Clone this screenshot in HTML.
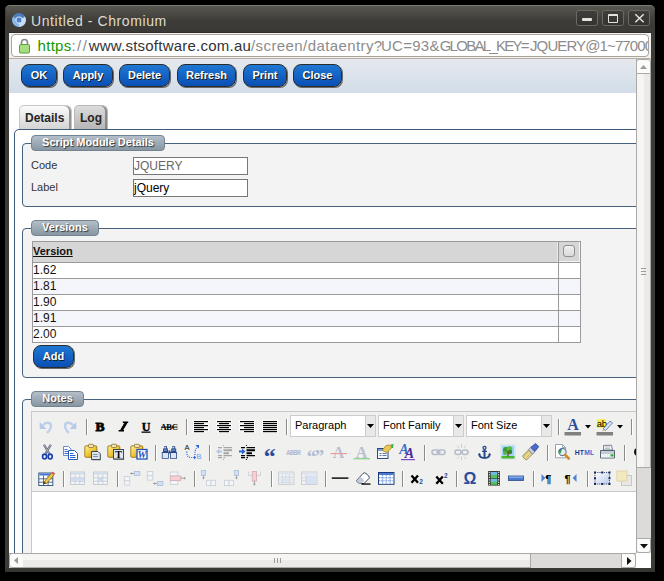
<!DOCTYPE html>
<html><head><meta charset="utf-8"><title>Untitled</title>
<style>html,body{margin:0;padding:0}body{width:664px;height:581px;background:#000;position:relative;overflow:hidden;font-family:'Liberation Sans', sans-serif}svg{display:block}</style>
</head><body>
<div style="position:absolute;left:5px;top:5px;width:650px;height:567px;background:linear-gradient(#3c3b37 560px,#34332f);border-radius:5px 5px 0 0;box-shadow:inset 0 1px 0 #7a7974"></div>
<div style="position:absolute;left:6px;top:6px;width:648px;height:27px;background:linear-gradient(#58574f,#3d3c38 55%,#3a3935);border-radius:4px 4px 0 0"></div>
<div style="position:absolute;left:9px;top:32px;width:642px;height:1px;background:#2e2d29"></div>
<svg style="position:absolute;left:12px;top:13px;" width="14" height="14" viewBox="0 0 14 14"><path d="M7 7 L0.94 3.5 A7 7 0 0 1 13.06 3.5Z" fill="#4c7cbc"/>
<path d="M7 7 L13.06 3.5 A7 7 0 0 1 7 14Z" fill="#c6dcf2"/>
<path d="M7 7 L7 14 A7 7 0 0 1 0.94 3.5Z" fill="#88b6e4"/>
<circle cx="7" cy="7" r="3.4" fill="#eaf2fa"/><rect x="4.6" y="4.6" width="4.8" height="4.8" rx="1.2" fill="#4a80cc"/></svg>
<div style="position:absolute;left:31px;top:12.5px;font:14px 'Liberation Sans', sans-serif;letter-spacing:0.6px;color:#dfdbd2;white-space:nowrap">Untitled - Chromium</div>
<div style="position:absolute;left:576px;top:10px;width:20px;height:14px;border:1px solid #6a6964;border-radius:3px;background:linear-gradient(#3e3d39,#34332f)"></div>
<div style="position:absolute;left:602px;top:10px;width:20px;height:14px;border:1px solid #6a6964;border-radius:3px;background:linear-gradient(#3e3d39,#34332f)"></div>
<div style="position:absolute;left:628px;top:10px;width:20px;height:14px;border:1px solid #6a6964;border-radius:3px;background:linear-gradient(#3e3d39,#34332f)"></div>
<div style="position:absolute;left:582px;top:18px;width:10px;height:3px;background:#e6e3dc;border-radius:1px"></div>
<div style="position:absolute;left:608px;top:14px;width:8px;height:6px;border:1.5px solid #e6e3dc;border-top-width:2.5px;border-radius:1px"></div>
<svg style="position:absolute;left:634px;top:13px;" width="11" height="10" viewBox="0 0 11 10"><path d="M1.3 1.3 L9.7 9.2 M9.7 1.3 L1.3 9.2" stroke="#e6e3dc" stroke-width="1.5"/></svg>
<div style="position:absolute;left:9px;top:33px;width:642px;height:26px;background:#f2f1ef"></div>
<div style="position:absolute;left:9px;top:58px;width:642px;height:1px;background:#b5b1a8"></div>
<div style="position:absolute;left:11px;top:34px;width:636px;height:21px;background:#fff;border:1px solid #a9a59d;border-radius:4px"></div>
<div style="position:absolute;left:0;top:0;width:664px;height:581px;clip:rect(35px,648px,56px,12px)">
<div style="position:absolute;left:37.6px;top:36.6px;font:15px 'Liberation Sans', sans-serif;letter-spacing:0.28px;color:#119a00;white-space:nowrap">https</div>
<div style="position:absolute;left:71.5px;top:36.6px;font:15px 'Liberation Sans', sans-serif;letter-spacing:1.40px;color:#8a8a8a;white-space:nowrap">://</div>
<div style="position:absolute;left:88.7px;top:36.6px;font:15px 'Liberation Sans', sans-serif;letter-spacing:0.23px;color:#333;white-space:nowrap">www.stsoftware.com.au</div>
<div style="position:absolute;left:251.0px;top:36.6px;font:15px 'Liberation Sans', sans-serif;letter-spacing:0.41px;color:#8c8c8c;white-space:nowrap">/screen/dataentry?</div>
<div style="position:absolute;left:381.0px;top:36.6px;font:15px 'Liberation Sans', sans-serif;letter-spacing:0.26px;color:#8c8c8c;white-space:nowrap">UC=93&amp;</div>
<div style="position:absolute;left:439.7px;top:36.6px;font:15px 'Liberation Sans', sans-serif;letter-spacing:-1.74px;color:#8c8c8c;white-space:nowrap">GLOBAL_KEY=</div>
<div style="position:absolute;left:530.0px;top:36.6px;font:15px 'Liberation Sans', sans-serif;letter-spacing:-0.89px;color:#8c8c8c;white-space:nowrap">JQUERY@1~7700</div>
<div style="position:absolute;left:644.7px;top:36.6px;font:15px 'Liberation Sans', sans-serif;letter-spacing:1.66px;color:#8c8c8c;white-space:nowrap">0</div>
</div>
<svg style="position:absolute;left:18px;top:38px;" width="13" height="16" viewBox="0 0 13 16"><path d="M3.5 6 V4.5 A3 3 0 0 1 9.5 4.5 V6" fill="none" stroke="#8a8a8a" stroke-width="1.6"/><rect x="1.5" y="6.5" width="10" height="8.5" rx="1" fill="#a6df7f" stroke="#5c9c3c"/></svg>
<div style="position:absolute;left:0;top:0;width:664px;height:581px;clip:rect(59px,636px,553px,9px)">
<div style="position:absolute;left:9px;top:59px;width:627px;height:494px;background:#fff"></div>
<div style="position:absolute;left:9px;top:59px;width:627px;height:34px;background:linear-gradient(#e5e9ee,#d2dde8)"></div>
<div style="position:absolute;left:21px;top:64px;width:36px;height:23px;box-sizing:border-box;border:1px solid #2b2b2b;border-radius:8px;background:linear-gradient(#1f78d3,#0a4fb4);box-shadow:1px 1px 0 #6a6a6a;color:#fff;font:bold 11px 'Liberation Sans', sans-serif;text-align:center;line-height:21px;text-shadow:1px 1px 0 #1a1a1a">OK</div>
<div style="position:absolute;left:63px;top:64px;width:50px;height:23px;box-sizing:border-box;border:1px solid #2b2b2b;border-radius:8px;background:linear-gradient(#1f78d3,#0a4fb4);box-shadow:1px 1px 0 #6a6a6a;color:#fff;font:bold 11px 'Liberation Sans', sans-serif;text-align:center;line-height:21px;text-shadow:1px 1px 0 #1a1a1a">Apply</div>
<div style="position:absolute;left:119px;top:64px;width:51px;height:23px;box-sizing:border-box;border:1px solid #2b2b2b;border-radius:8px;background:linear-gradient(#1f78d3,#0a4fb4);box-shadow:1px 1px 0 #6a6a6a;color:#fff;font:bold 11px 'Liberation Sans', sans-serif;text-align:center;line-height:21px;text-shadow:1px 1px 0 #1a1a1a">Delete</div>
<div style="position:absolute;left:177px;top:64px;width:59px;height:23px;box-sizing:border-box;border:1px solid #2b2b2b;border-radius:8px;background:linear-gradient(#1f78d3,#0a4fb4);box-shadow:1px 1px 0 #6a6a6a;color:#fff;font:bold 11px 'Liberation Sans', sans-serif;text-align:center;line-height:21px;text-shadow:1px 1px 0 #1a1a1a">Refresh</div>
<div style="position:absolute;left:243px;top:64px;width:44px;height:23px;box-sizing:border-box;border:1px solid #2b2b2b;border-radius:8px;background:linear-gradient(#1f78d3,#0a4fb4);box-shadow:1px 1px 0 #6a6a6a;color:#fff;font:bold 11px 'Liberation Sans', sans-serif;text-align:center;line-height:21px;text-shadow:1px 1px 0 #1a1a1a">Print</div>
<div style="position:absolute;left:293px;top:64px;width:49px;height:23px;box-sizing:border-box;border:1px solid #2b2b2b;border-radius:8px;background:linear-gradient(#1f78d3,#0a4fb4);box-shadow:1px 1px 0 #6a6a6a;color:#fff;font:bold 11px 'Liberation Sans', sans-serif;text-align:center;line-height:21px;text-shadow:1px 1px 0 #1a1a1a">Close</div>
<div style="position:absolute;left:19px;top:105px;width:53px;height:24px;box-sizing:border-box;border:1px solid #c6c6c6;border-bottom:none;border-radius:5px 6px 0 0;background:linear-gradient(#fbfbfb,#d4d4d4);box-shadow:inset -2px 0 0 #939393;font:bold 12px 'Liberation Sans', sans-serif;color:#262626;padding:7px 0 0 6px"></div>
<div style="position:absolute;left:25px;top:111px;font:bold 12px 'Liberation Sans', sans-serif;color:#262626">Details</div>
<div style="position:absolute;left:74px;top:105px;width:34px;height:24px;box-sizing:border-box;border:1px solid #b8b8b8;border-bottom:none;border-radius:5px 6px 0 0;background:linear-gradient(#dcdcdc,#b6b6b6);box-shadow:inset -2px 0 0 #8a8a8a"></div>
<div style="position:absolute;left:80px;top:111px;font:bold 12px 'Liberation Sans', sans-serif;color:#262626">Log</div>
<div style="position:absolute;left:14px;top:129px;width:700px;height:600px;box-sizing:border-box;border:1px solid #3d5b7c;border-radius:5px;background:#fff"></div>
<div style="position:absolute;left:22px;top:143px;width:700px;height:64px;box-sizing:border-box;border:1px solid #46627f;border-radius:4px;background:#f3f3f3"></div><div style="position:absolute;left:31px;top:135px;width:134px;height:16px;box-sizing:border-box;border:1px solid #74838f;border-radius:4px;background:linear-gradient(#b3bec8,#8797a3);color:#fff;font:bold 11px 'Liberation Sans', sans-serif;text-align:center;line-height:13px;text-shadow:1px 1px 1px #333">Script Module Details</div>
<div style="position:absolute;left:31px;top:158.5px;font:11px 'Liberation Sans', sans-serif;color:#333">Code</div>
<div style="position:absolute;left:31px;top:180.5px;font:11px 'Liberation Sans', sans-serif;color:#333">Label</div>
<div style="position:absolute;left:133px;top:157px;width:115px;height:18px;box-sizing:border-box;border:1px solid #777;background:#fff;font:12px 'Liberation Sans', sans-serif;color:#666;padding:1px 0 0 0;line-height:15px">JQUERY</div>
<div style="position:absolute;left:133px;top:179px;width:115px;height:18px;box-sizing:border-box;border:1px solid #777;background:#fff;font:12px 'Liberation Sans', sans-serif;color:#000;padding:1px 0 0 0;line-height:15px">jQuery</div>
<div style="position:absolute;left:22px;top:228px;width:700px;height:150px;box-sizing:border-box;border:1px solid #46627f;border-radius:4px;background:#f3f3f3"></div><div style="position:absolute;left:31px;top:220px;width:68px;height:16px;box-sizing:border-box;border:1px solid #74838f;border-radius:4px;background:linear-gradient(#b3bec8,#8797a3);color:#fff;font:bold 11px 'Liberation Sans', sans-serif;text-align:center;line-height:13px;text-shadow:1px 1px 1px #333">Versions</div>
<div style="position:absolute;left:32px;top:241px;width:549px;height:102px;box-sizing:border-box;border:1px solid #9a9a9a;background:#fff"></div>
<div style="position:absolute;left:33px;top:242px;width:525px;height:20px;background:#d6d6d6"></div>
<div style="position:absolute;left:559px;top:242px;width:21px;height:20px;background:#d6d6d6"></div>
<div style="position:absolute;left:558px;top:242px;width:1px;height:100px;background:#9a9a9a"></div>
<div style="position:absolute;left:557px;top:242px;width:1px;height:20px;background:#ececec"></div>
<div style="position:absolute;left:33px;top:245px;font:bold 11px 'Liberation Sans', sans-serif;color:#111;text-decoration:underline">Version</div>
<div style="position:absolute;left:563px;top:245px;width:12px;height:12px;box-sizing:border-box;border:1px solid #8f8f8f;border-radius:3px;background:linear-gradient(#f0f0f0,#dadada)"></div>
<div style="position:absolute;left:579px;top:242px;width:1px;height:20px;background:#f4f4f4"></div>
<div style="position:absolute;left:559px;top:261px;width:21px;height:1px;background:#f4f4f4"></div>
<div style="position:absolute;left:33px;top:262px;width:547px;height:1px;background:#9a9a9a"></div>
<div style="position:absolute;left:33px;top:263px;font:12px 'Liberation Sans', sans-serif;color:#111;line-height:15px">1.62</div>
<div style="position:absolute;left:33px;top:278px;width:547px;height:1px;background:#9a9a9a"></div>
<div style="position:absolute;left:33px;top:279px;width:525px;height:15px;background:#f4f6fb"></div>
<div style="position:absolute;left:559px;top:279px;width:21px;height:15px;background:#f4f6fb"></div>
<div style="position:absolute;left:33px;top:279px;font:12px 'Liberation Sans', sans-serif;color:#111;line-height:15px">1.81</div>
<div style="position:absolute;left:33px;top:294px;width:547px;height:1px;background:#9a9a9a"></div>
<div style="position:absolute;left:33px;top:295px;font:12px 'Liberation Sans', sans-serif;color:#111;line-height:15px">1.90</div>
<div style="position:absolute;left:33px;top:310px;width:547px;height:1px;background:#9a9a9a"></div>
<div style="position:absolute;left:33px;top:311px;width:525px;height:15px;background:#f4f6fb"></div>
<div style="position:absolute;left:559px;top:311px;width:21px;height:15px;background:#f4f6fb"></div>
<div style="position:absolute;left:33px;top:311px;font:12px 'Liberation Sans', sans-serif;color:#111;line-height:15px">1.91</div>
<div style="position:absolute;left:33px;top:326px;width:547px;height:1px;background:#9a9a9a"></div>
<div style="position:absolute;left:33px;top:327px;font:12px 'Liberation Sans', sans-serif;color:#111;line-height:15px">2.00</div>
<div style="position:absolute;left:33px;top:345px;width:41px;height:23px;box-sizing:border-box;border:1px solid #2b2b2b;border-radius:8px;background:linear-gradient(#1f78d3,#0a4fb4);box-shadow:1px 1px 0 #6a6a6a;color:#fff;font:bold 11px 'Liberation Sans', sans-serif;text-align:center;line-height:21px;text-shadow:1px 1px 0 #1a1a1a">Add</div>
<div style="position:absolute;left:22px;top:399px;width:700px;height:302px;box-sizing:border-box;border:1px solid #46627f;border-radius:4px;background:#f3f3f3"></div><div style="position:absolute;left:31px;top:391px;width:53px;height:16px;box-sizing:border-box;border:1px solid #74838f;border-radius:4px;background:linear-gradient(#b3bec8,#8797a3);color:#fff;font:bold 11px 'Liberation Sans', sans-serif;text-align:center;line-height:13px;text-shadow:1px 1px 1px #333">Notes</div>
<div style="position:absolute;left:31px;top:411px;width:700px;height:200px;box-sizing:border-box;border:1px solid #c8c8c8;background:#fff"></div>
<div style="position:absolute;left:32px;top:412px;width:700px;height:79px;background:#f0f0ee"></div>
<div style="position:absolute;left:32px;top:491px;width:700px;height:1px;background:#c8c8c8"></div>
<svg style="position:absolute;left:36px;top:416px;" width="20" height="20" viewBox="0 0 20 20"><path d="M7 9.5 C9 6 15 5.5 15 10 C15 13 13 15 11 17" fill="none" stroke="#c0cfec" stroke-width="2.4"/><path d="M3.7 6 V13 H10.5Z" fill="#b8c8ea"/></svg>
<svg style="position:absolute;left:59px;top:416px;" width="20" height="20" viewBox="0 0 20 20"><g transform="translate(21,0) scale(-1,1)"><path d="M7 9.5 C9 6 15 5.5 15 10 C15 13 13 15 11 17" fill="none" stroke="#c0cfec" stroke-width="2.4"/><path d="M3.7 6 V13 H10.5Z" fill="#b8c8ea"/></g></svg>
<div style="position:absolute;left:86px;top:419px;width:1px;height:16px;background:#8f8a8a"></div><div style="position:absolute;left:87px;top:419px;width:1px;height:16px;background:#fff"></div>
<svg style="position:absolute;left:90px;top:416px;" width="20" height="20" viewBox="0 0 20 20"><text x="10" y="15" text-anchor="middle" font-family="Liberation Serif" font-weight="bold" font-size="13.5" fill="#000" stroke="#000" stroke-width="0.9">B</text></svg>
<svg style="position:absolute;left:113px;top:416px;" width="20" height="20" viewBox="0 0 20 20"><path d="M9.8 6.2 H15.2 M5.6 14.8 H11 M13 6.2 L8.2 14.8" stroke="#000" stroke-width="1.5" fill="none"/><path d="M13.2 6.5 L8.4 14.5" stroke="#000" stroke-width="2.6"/></svg>
<svg style="position:absolute;left:136px;top:416px;" width="20" height="20" viewBox="0 0 20 20"><text x="10" y="14.5" text-anchor="middle" font-family="Liberation Serif" font-weight="bold" font-size="12" fill="#000" stroke="#000" stroke-width="0.4">U</text><rect x="5.5" y="15.5" width="9" height="1.3" fill="#000"/></svg>
<svg style="position:absolute;left:159px;top:416px;" width="20" height="20" viewBox="0 0 20 20"><text x="10" y="14" text-anchor="middle" font-family="Liberation Serif" font-weight="bold" font-size="8.5" fill="#000" letter-spacing="-0.3">ABC</text><rect x="2" y="10.6" width="16.5" height="1" fill="#000"/></svg>
<div style="position:absolute;left:186px;top:419px;width:1px;height:16px;background:#8f8a8a"></div><div style="position:absolute;left:187px;top:419px;width:1px;height:16px;background:#fff"></div>
<svg style="position:absolute;left:190px;top:416px;" width="20" height="20" viewBox="0 0 20 20"><rect x="3" y="4" width="16" height="3" fill="#fff" opacity="0.9"/><rect x="3" y="6" width="12" height="3" fill="#fff" opacity="0.9"/><rect x="3" y="8" width="16" height="3" fill="#fff" opacity="0.9"/><rect x="3" y="10" width="12" height="3" fill="#fff" opacity="0.9"/><rect x="3" y="12" width="16" height="3" fill="#fff" opacity="0.9"/><rect x="3" y="14" width="12" height="3" fill="#fff" opacity="0.9"/><rect x="4" y="5" width="14" height="1.2" fill="#000"/><rect x="4" y="7" width="10" height="1.2" fill="#000"/><rect x="4" y="9" width="14" height="1.2" fill="#000"/><rect x="4" y="11" width="10" height="1.2" fill="#000"/><rect x="4" y="13" width="14" height="1.2" fill="#000"/><rect x="4" y="15" width="10" height="1.2" fill="#000"/></svg>
<svg style="position:absolute;left:213px;top:416px;" width="20" height="20" viewBox="0 0 20 20"><rect x="3" y="4" width="16" height="3" fill="#fff" opacity="0.9"/><rect x="5" y="6" width="12" height="3" fill="#fff" opacity="0.9"/><rect x="3" y="8" width="16" height="3" fill="#fff" opacity="0.9"/><rect x="5" y="10" width="12" height="3" fill="#fff" opacity="0.9"/><rect x="3" y="12" width="16" height="3" fill="#fff" opacity="0.9"/><rect x="5" y="14" width="12" height="3" fill="#fff" opacity="0.9"/><rect x="4" y="5" width="14" height="1.2" fill="#000"/><rect x="6" y="7" width="10" height="1.2" fill="#000"/><rect x="4" y="9" width="14" height="1.2" fill="#000"/><rect x="6" y="11" width="10" height="1.2" fill="#000"/><rect x="4" y="13" width="14" height="1.2" fill="#000"/><rect x="6" y="15" width="10" height="1.2" fill="#000"/></svg>
<svg style="position:absolute;left:236px;top:416px;" width="20" height="20" viewBox="0 0 20 20"><rect x="3" y="4" width="16" height="3" fill="#fff" opacity="0.9"/><rect x="7" y="6" width="12" height="3" fill="#fff" opacity="0.9"/><rect x="3" y="8" width="16" height="3" fill="#fff" opacity="0.9"/><rect x="7" y="10" width="12" height="3" fill="#fff" opacity="0.9"/><rect x="3" y="12" width="16" height="3" fill="#fff" opacity="0.9"/><rect x="7" y="14" width="12" height="3" fill="#fff" opacity="0.9"/><rect x="4" y="5" width="14" height="1.2" fill="#000"/><rect x="8" y="7" width="10" height="1.2" fill="#000"/><rect x="4" y="9" width="14" height="1.2" fill="#000"/><rect x="8" y="11" width="10" height="1.2" fill="#000"/><rect x="4" y="13" width="14" height="1.2" fill="#000"/><rect x="8" y="15" width="10" height="1.2" fill="#000"/></svg>
<svg style="position:absolute;left:259px;top:416px;" width="20" height="20" viewBox="0 0 20 20"><rect x="3" y="4" width="16" height="3" fill="#fff" opacity="0.9"/><rect x="3" y="6" width="16" height="3" fill="#fff" opacity="0.9"/><rect x="3" y="8" width="16" height="3" fill="#fff" opacity="0.9"/><rect x="3" y="10" width="16" height="3" fill="#fff" opacity="0.9"/><rect x="3" y="12" width="16" height="3" fill="#fff" opacity="0.9"/><rect x="3" y="14" width="16" height="3" fill="#fff" opacity="0.9"/><rect x="4" y="5" width="14" height="1.2" fill="#000"/><rect x="4" y="7" width="14" height="1.2" fill="#000"/><rect x="4" y="9" width="14" height="1.2" fill="#000"/><rect x="4" y="11" width="14" height="1.2" fill="#000"/><rect x="4" y="13" width="14" height="1.2" fill="#000"/><rect x="4" y="15" width="14" height="1.2" fill="#000"/></svg>
<div style="position:absolute;left:286px;top:419px;width:1px;height:16px;background:#8f8a8a"></div><div style="position:absolute;left:287px;top:419px;width:1px;height:16px;background:#fff"></div>
<div style="position:absolute;left:558px;top:419px;width:1px;height:16px;background:#8f8a8a"></div><div style="position:absolute;left:559px;top:419px;width:1px;height:16px;background:#fff"></div>
<div style="position:absolute;left:631px;top:419px;width:1px;height:16px;background:#8f8a8a"></div><div style="position:absolute;left:632px;top:419px;width:1px;height:16px;background:#fff"></div>
<svg style="position:absolute;left:36px;top:442px;" width="20" height="20" viewBox="0 0 20 20"><path d="M8 2.8 L13.2 11.5 M14.8 2.8 L9.6 11.5" stroke="#5a6470" stroke-width="2.2"/><path d="M8 2.8 L13.2 11.5 M14.8 2.8 L9.6 11.5" stroke="#b0b8c4" stroke-width="0.9"/><ellipse cx="8.6" cy="14.6" rx="2" ry="2.4" fill="none" stroke="#1a40b0" stroke-width="1.7"/><ellipse cx="14.2" cy="14.6" rx="2" ry="2.4" fill="none" stroke="#1a40b0" stroke-width="1.7"/></svg>
<svg style="position:absolute;left:59px;top:442px;" width="20" height="20" viewBox="0 0 20 20"><path d="M4.5 4.5 H9.5 L12 7 V13.5 H4.5Z" fill="#fff" stroke="#6a8ccc"/><path d="M5.5 7.5h3M5.5 9.5h4M5.5 11.5h4" stroke="#3a6ad0" stroke-width="1"/><path d="M9.5 8.5 H15.5 L18.5 11.5 V17.5 H9.5Z" fill="#fff" stroke="#2a5ab8"/><path d="M11 11.5h3.5M11 13.5h5.5M11 15.5h5.5" stroke="#2a62d0" stroke-width="1"/></svg>
<svg style="position:absolute;left:82px;top:442px;" width="20" height="20" viewBox="0 0 20 20"><defs><linearGradient id="g1" x1="0" y1="0" x2="1" y2="1"><stop offset="0" stop-color="#fff0a0"/><stop offset="0.5" stop-color="#f0c838"/><stop offset="1" stop-color="#c08a10"/></linearGradient></defs><rect x="2.8" y="3.8" width="12" height="11.5" rx="1.2" fill="url(#g1)" stroke="#9a7418" stroke-width="0.9"/><rect x="6.5" y="2.3" width="5" height="3.2" rx="0.8" fill="#f0e4b0" stroke="#8a7030" stroke-width="0.8"/><path d="M9.5 9.5 H16 L18.3 11.8 V17.5 H9.5Z" fill="#dde5f0" stroke="#3a4658"/><path d="M11 12.5h4.5M11 14.5h5" stroke="#8090a8"/><rect x="10" y="17.5" width="9" height="1" fill="#555" opacity="0.5"/></svg>
<svg style="position:absolute;left:105px;top:442px;" width="20" height="20" viewBox="0 0 20 20"><defs><linearGradient id="g2" x1="0" y1="0" x2="1" y2="1"><stop offset="0" stop-color="#fff0a0"/><stop offset="0.5" stop-color="#f0c838"/><stop offset="1" stop-color="#c08a10"/></linearGradient></defs><rect x="2.8" y="3.8" width="12" height="11.5" rx="1.2" fill="url(#g2)" stroke="#9a7418" stroke-width="0.9"/><rect x="6.5" y="2.3" width="5" height="3.2" rx="0.8" fill="#f0e4b0" stroke="#8a7030" stroke-width="0.8"/><rect x="8.5" y="7.5" width="10" height="9.5" fill="#dfe6ef" stroke="#404654"/><rect x="9.2" y="17" width="10" height="1" fill="#444" opacity="0.6"/><text x="13.5" y="15.5" text-anchor="middle" font-family="Liberation Serif" font-weight="bold" font-size="10" fill="#000">T</text></svg>
<svg style="position:absolute;left:128px;top:442px;" width="20" height="20" viewBox="0 0 20 20"><defs><linearGradient id="g3" x1="0" y1="0" x2="1" y2="1"><stop offset="0" stop-color="#fff0a0"/><stop offset="0.5" stop-color="#f0c838"/><stop offset="1" stop-color="#c08a10"/></linearGradient></defs><rect x="2.8" y="3.8" width="12" height="11.5" rx="1.2" fill="url(#g3)" stroke="#9a7418" stroke-width="0.9"/><rect x="6.5" y="2.3" width="5" height="3.2" rx="0.8" fill="#f0e4b0" stroke="#8a7030" stroke-width="0.8"/><rect x="9" y="7.5" width="10" height="9.5" fill="#fff" stroke="#2050c0" stroke-width="1.3"/><text x="14" y="15.8" text-anchor="middle" font-family="Liberation Serif" font-weight="bold" font-style="italic" font-size="10" fill="#2050c0">W</text></svg>
<div style="position:absolute;left:155px;top:445px;width:1px;height:16px;background:#8f8a8a"></div><div style="position:absolute;left:156px;top:445px;width:1px;height:16px;background:#fff"></div>
<svg style="position:absolute;left:159px;top:442px;" width="20" height="20" viewBox="0 0 20 20"><path d="M5 4.2 H8 V6.5 H9 V10 H9.8 V16.7 H2.8 V10 H4 V6.5 H5Z" fill="#2a4888"/><rect x="3.6" y="11" width="5.4" height="5" fill="#dbe5f4"/><rect x="5.3" y="5" width="1.8" height="1.4" fill="#c8d4ec"/><rect x="4.8" y="7.3" width="3.4" height="1.6" fill="#6a88c0"/><path d="M13.2 4.2 H16.2 V6.5 H17.2 V10 H18.0 V16.7 H11.0 V10 H12.2 V6.5 H13.2Z" fill="#2a4888"/><rect x="11.799999999999999" y="11" width="5.4" height="5" fill="#dbe5f4"/><rect x="13.5" y="5" width="1.8" height="1.4" fill="#c8d4ec"/><rect x="13.0" y="7.3" width="3.4" height="1.6" fill="#6a88c0"/><rect x="9.5" y="8.5" width="2" height="3" fill="#2a4888"/></svg>
<svg style="position:absolute;left:182px;top:442px;" width="20" height="20" viewBox="0 0 20 20"><text x="2.5" y="8.3" font-family="Liberation Sans" font-size="7.5" fill="#111">A</text><path d="M4.8 9.5 Q4.5 15.5 9 15.5 H12" fill="none" stroke="#2a62e0" stroke-width="1.2" stroke-dasharray="1 1.1"/><path d="M12 13.5 L14.2 15.5 L12 17.5Z" fill="#2a62e0"/><path d="M13 13 Q12.5 8 15.5 4.5" fill="none" stroke="#2a62e0" stroke-width="1.2" stroke-dasharray="1 1.1"/><path d="M13.5 3 H17 V6.5Z" fill="#2a62e0"/><text x="14.5" y="17.4" font-family="Liberation Sans" font-size="7.5" fill="#6a9af0">B</text></svg>
<div style="position:absolute;left:209px;top:445px;width:1px;height:16px;background:#8f8a8a"></div><div style="position:absolute;left:210px;top:445px;width:1px;height:16px;background:#fff"></div>
<svg style="position:absolute;left:213px;top:442px;" width="20" height="20" viewBox="0 0 20 20"><g stroke="#a6a6a6"><path d="M5 5.6h4M5 13.6h4M5 15.6h4M10.5 5.6h8.5M10.5 13.6h8.5M10.5 15.6h1.5" stroke-width="1.1"/><path d="M10.5 8.3h8.5M10.5 11.2h5.5" stroke-width="2"/><path d="M10.4 3v1M10.4 17v1" stroke-width="1"/></g><path d="M3 9.4 L6.5 6.4 V8.4 H9 V10.4 H6.5 V12.4Z" fill="#b4c8ec"/></svg>
<svg style="position:absolute;left:236px;top:442px;" width="20" height="20" viewBox="0 0 20 20"><g stroke="#000"><path d="M5 5.6h4M5 13.6h4M5 15.6h4M10.5 5.6h8.5M10.5 13.6h8.5M10.5 15.6h1.5" stroke-width="1.1"/><path d="M10.5 8.3h8.5M10.5 11.2h5.5" stroke-width="2"/><path d="M10.4 3v1M10.4 17v1" stroke-width="1"/></g><path d="M9.5 9.4 L6 6.4 V8.4 H3 V10.4 H6 V12.4Z" fill="#2a62d0"/></svg>
<svg style="position:absolute;left:259px;top:442px;" width="20" height="20" viewBox="0 0 20 20"><text x="10.8" y="21.5" text-anchor="middle" font-family="Liberation Serif" font-weight="bold" font-size="24" fill="#2a4a9c">&#8220;</text></svg>
<svg style="position:absolute;left:282px;top:442px;" width="20" height="20" viewBox="0 0 20 20"><text x="11.3" y="12.8" text-anchor="middle" font-family="Liberation Mono" font-weight="bold" font-size="6.8" fill="#b0bcd4" letter-spacing="-0.6">ABBR</text></svg>
<svg style="position:absolute;left:305px;top:442px;" width="20" height="20" viewBox="0 0 20 20"><text x="6.6" y="20.5" text-anchor="middle" font-family="Liberation Serif" font-weight="bold" font-size="19" fill="#b0bcd4">&#8220;</text><text x="14.4" y="20.5" text-anchor="middle" font-family="Liberation Serif" font-weight="bold" font-size="19" fill="#b0bcd4">&#8221;</text></svg>
<svg style="position:absolute;left:328px;top:442px;" width="20" height="20" viewBox="0 0 20 20"><text x="10.5" y="16" text-anchor="middle" font-family="Liberation Serif" font-weight="bold" font-size="16" fill="#b8c0d0">A</text><rect x="2.5" y="11" width="16.5" height="1.1" fill="#ec9a9a"/></svg>
<svg style="position:absolute;left:351px;top:442px;" width="20" height="20" viewBox="0 0 20 20"><text x="10.5" y="15.5" text-anchor="middle" font-family="Liberation Serif" font-weight="bold" font-size="16" fill="#b8c0d0">A</text><rect x="2.5" y="16.2" width="16.5" height="1.1" fill="#7ccf7c"/></svg>
<svg style="position:absolute;left:374px;top:442px;" width="20" height="20" viewBox="0 0 20 20"><rect x="3.5" y="6.5" width="10.5" height="10" fill="#f4f6fa" stroke="#2a4a80"/><rect x="4" y="7" width="9.5" height="2" fill="#7aa0d8"/><path d="M5.5 11.5h2M8.5 11.5h4M5.5 13.5h2M8.5 13.5h4" stroke="#5a78a8" stroke-width="1"/><path d="M8 8.5 L12 3.5 L16.5 3 L17.5 6 L13 10.5Z" fill="#ecc850" stroke="#9a7a20" stroke-width="0.7"/><path d="M17 2.5 L19.5 2 L19 6 L17.5 6Z" fill="#30b040"/></svg>
<svg style="position:absolute;left:397px;top:442px;" width="20" height="20" viewBox="0 0 20 20"><text x="7" y="12" text-anchor="middle" font-family="Liberation Serif" font-weight="bold" font-style="italic" font-size="14" fill="#3a6ed0">A</text><text x="12.5" y="16" text-anchor="middle" font-family="Liberation Serif" font-weight="bold" font-style="italic" font-size="14" fill="#5028a0">A</text><rect x="4" y="17" width="14" height="1.2" fill="#7a48c8"/></svg>
<div style="position:absolute;left:424px;top:445px;width:1px;height:16px;background:#8f8a8a"></div><div style="position:absolute;left:425px;top:445px;width:1px;height:16px;background:#fff"></div>
<svg style="position:absolute;left:428px;top:442px;" width="20" height="20" viewBox="0 0 20 20"><rect x="4" y="8" width="7" height="4.5" rx="2.2" fill="none" stroke="#b4bcc8" stroke-width="1.6"/><rect x="10" y="8" width="7" height="4.5" rx="2.2" fill="none" stroke="#b4bcc8" stroke-width="1.6"/><path d="M8 10.2h5" stroke="#b4bcc8" stroke-width="1.2"/></svg>
<svg style="position:absolute;left:451px;top:442px;" width="20" height="20" viewBox="0 0 20 20"><rect x="4" y="8" width="6" height="4.5" rx="2.2" fill="none" stroke="#b4bcc8" stroke-width="1.6"/><rect x="11" y="8" width="6" height="4.5" rx="2.2" fill="none" stroke="#b4bcc8" stroke-width="1.6"/><path d="M10.5 2v4M10.5 14.5v4M6 3.5l2 2.5M15 3.5l-2 2.5M6 17l2-2.5M15 17l-2-2.5" stroke="#c4ccd8" stroke-width="0.9"/></svg>
<svg style="position:absolute;left:474px;top:442px;" width="20" height="20" viewBox="0 0 20 20"><circle cx="10.5" cy="5.8" r="1.5" fill="none" stroke="#2a4a8a" stroke-width="1.3"/><path d="M10.5 7.2 V16" stroke="#2a4a8a" stroke-width="2"/><path d="M8 9.3h5" stroke="#2a4a8a" stroke-width="1.3"/><path d="M5.2 12 Q5.5 16 10.5 16 Q15.5 16 15.8 12" fill="none" stroke="#2a4a8a" stroke-width="2"/><path d="M4 12.8 L5.3 10.8 L6.8 12.8Z M14.2 12.8 L15.7 10.8 L17 12.8Z" fill="#2a4a8a"/></svg>
<svg style="position:absolute;left:497px;top:442px;" width="20" height="20" viewBox="0 0 20 20"><rect x="3.5" y="2.5" width="15" height="15" fill="#fff" stroke="#e4e4e4"/><rect x="4.5" y="3.5" width="13" height="13" fill="#9ed4f4"/><rect x="4.5" y="14" width="13" height="2.5" fill="#48b828"/><circle cx="9" cy="8" r="3" fill="#3a9a30"/><circle cx="12.5" cy="7" r="2.8" fill="#60b848"/><circle cx="13" cy="10" r="2.2" fill="#2a8a28"/><circle cx="8" cy="11" r="2" fill="#58b040"/><path d="M11 9 V14.5" stroke="#7a4a20" stroke-width="1.4"/></svg>
<svg style="position:absolute;left:520px;top:442px;" width="20" height="20" viewBox="0 0 20 20"><path d="M2.5 14 L8.5 8 L12.5 12 L6.5 18 Q4 17 2.5 14Z" fill="#e8d890" stroke="#8a7a40" stroke-width="0.8"/><path d="M4 14.5 L8.5 10 M6 16 L10 12" stroke="#b8a060" stroke-width="0.6"/><path d="M8.3 7.8 L10.5 5.6 L14.8 9.9 L12.6 12.1Z" fill="#c8d0e0" stroke="#5a6a90" stroke-width="0.7"/><path d="M10.8 5.3 L15.5 1.5 L18.8 4.6 L15 9.4Z" fill="#4a6ad0" stroke="#2a3a8a" stroke-width="0.7"/></svg>
<div style="position:absolute;left:547px;top:445px;width:1px;height:16px;background:#8f8a8a"></div><div style="position:absolute;left:548px;top:445px;width:1px;height:16px;background:#fff"></div>
<svg style="position:absolute;left:551px;top:442px;" width="20" height="20" viewBox="0 0 20 20"><path d="M4.5 2.5 H11.5 L14.5 5.5 V15.8 H4.5Z" fill="#fff" stroke="#8a9ab0" stroke-width="0.9"/><path d="M11.5 2.5 V5.5 H14.5" fill="none" stroke="#8a9ab0" stroke-width="0.8"/><circle cx="11.5" cy="10" r="3.6" fill="#e4eef8" stroke="#6a7a90" stroke-width="1.1"/><path d="M7.5 8 Q9 6 10.5 8 L10 11 Q8 12 7.3 10Z" fill="#38a048"/><path d="M8 7.5 Q9.5 6.2 11 7.2 L10.5 8.5Z" fill="#3a70d0"/><path d="M14.3 12.8 L17.8 16.5" stroke="#d08a30" stroke-width="2.6" stroke-linecap="round"/></svg>
<svg style="position:absolute;left:574px;top:442px;" width="20" height="20" viewBox="0 0 20 20"><text x="10.5" y="12.8" text-anchor="middle" font-family="Liberation Sans" font-weight="bold" font-size="6.8" letter-spacing="0.2"><tspan fill="#1a3a8a">HT</tspan><tspan fill="#3a6ad8">ML</tspan></text></svg>
<svg style="position:absolute;left:597px;top:442px;" width="20" height="20" viewBox="0 0 20 20"><path d="M6.5 3.5 L14.5 3.2 L15.5 8 H6.5Z" fill="#f4f6f8" stroke="#6a7888" stroke-width="0.9"/><path d="M8 5h5M8 6.5h5" stroke="#a0aab8" stroke-width="0.7"/><path d="M3.5 8.5 H17.5 V16 H3.5Z" fill="#c4ccd6" stroke="#4a5868" stroke-width="0.9"/><rect x="4" y="12" width="13" height="3.5" fill="#eef2f6"/><rect x="13.5" y="12.3" width="3" height="2.2" fill="#28b028"/></svg>
<div style="position:absolute;left:624px;top:445px;width:1px;height:16px;background:#8f8a8a"></div><div style="position:absolute;left:625px;top:445px;width:1px;height:16px;background:#fff"></div>
<svg style="position:absolute;left:628px;top:442px;" width="20" height="20" viewBox="0 0 20 20"><circle cx="10" cy="10" r="4" fill="#111"/></svg>
<svg style="position:absolute;left:36px;top:468px;" width="20" height="20" viewBox="0 0 20 20"><g opacity="1"><rect x="2.8" y="5" width="14" height="12.5" fill="#fff" stroke="#2a4a7a" stroke-width="0.9"/><rect x="3.3" y="5.5" width="13" height="2" fill="#4a7ad8"/><path d="M2.8 10.8h14M2.8 14.2h14M7.5 7.5v10.0M12.1 7.5v10.0" stroke="#2a4a7a" stroke-width="0.8"/></g><path d="M8 14 L15.5 5 L18 7 L10.5 15.5Z" fill="#f0c840" stroke="#806010" stroke-width="0.7"/><path d="M15.5 5 L16.8 3.4 L19.3 5.4 L18 7Z" fill="#e06060"/><path d="M8 14 L7.6 16.2 L10.5 15.5Z" fill="#333"/></svg>
<div style="position:absolute;left:63px;top:471px;width:1px;height:16px;background:#8f8a8a"></div><div style="position:absolute;left:64px;top:471px;width:1px;height:16px;background:#fff"></div>
<svg style="position:absolute;left:67px;top:468px;" width="20" height="20" viewBox="0 0 20 20"><g opacity="1"><rect x="3.5" y="4" width="14" height="12.5" fill="#f4f4f4" stroke="#c0c8d4" stroke-width="0.9"/><rect x="4.0" y="4.5" width="13" height="2" fill="#d0dcec"/><path d="M3.5 9.8h14M3.5 13.2h14M8.2 6.5v10.0M12.8 6.5v10.0" stroke="#c0c8d4" stroke-width="0.8"/></g><rect x="4" y="9.8" width="13" height="3" fill="#d0dcf0"/></svg>
<svg style="position:absolute;left:90px;top:468px;" width="20" height="20" viewBox="0 0 20 20"><g opacity="1"><rect x="3.5" y="4" width="14" height="12.5" fill="#f4f4f4" stroke="#c0c8d4" stroke-width="0.9"/><rect x="4.0" y="4.5" width="13" height="2" fill="#d0dcec"/><path d="M3.5 9.8h14M3.5 13.2h14M8.2 6.5v10.0M12.8 6.5v10.0" stroke="#c0c8d4" stroke-width="0.8"/></g><rect x="8.3" y="10" width="4.4" height="3" fill="#c8d8f0"/></svg>
<div style="position:absolute;left:117px;top:471px;width:1px;height:16px;background:#8f8a8a"></div><div style="position:absolute;left:118px;top:471px;width:1px;height:16px;background:#fff"></div>
<svg style="position:absolute;left:121px;top:468px;" width="20" height="20" viewBox="0 0 20 20"><rect x="3.3" y="8.5" width="5.5" height="4.3" fill="#f2f5fa" stroke="#cdd1d8" stroke-width="0.9"/><rect x="3.3" y="12.8" width="5.5" height="4.3" fill="#f2f5fa" stroke="#cdd1d8" stroke-width="0.9"/><rect x="13.3" y="3.5" width="5.5" height="4" fill="#d0e0f6" stroke="#b4c2d8" stroke-width="0.9"/><path d="M9.5 5.5h3.5" stroke="#a0a0a0" stroke-width="1"/><path d="M9 5.5 L11 4 V7Z" fill="#a0a0a0"/></svg>
<svg style="position:absolute;left:144px;top:468px;" width="20" height="20" viewBox="0 0 20 20"><rect x="3.3" y="3.5" width="5.5" height="4.3" fill="#f2f5fa" stroke="#cdd1d8" stroke-width="0.9"/><rect x="3.3" y="7.8" width="5.5" height="4.3" fill="#f2f5fa" stroke="#cdd1d8" stroke-width="0.9"/><rect x="13.3" y="13.5" width="5.5" height="4" fill="#d0e0f6" stroke="#b4c2d8" stroke-width="0.9"/><path d="M9.5 15.5h3.5" stroke="#a0a0a0" stroke-width="1"/><path d="M9 15.5 L11 14 V17Z" fill="#a0a0a0"/></svg>
<svg style="position:absolute;left:167px;top:468px;" width="20" height="20" viewBox="0 0 20 20"><rect x="3.3" y="4" width="7.5" height="4" fill="#f2f5fa" stroke="#cdd1d8" stroke-width="0.9"/><rect x="3.3" y="12.5" width="7.5" height="4" fill="#f2f5fa" stroke="#cdd1d8" stroke-width="0.9"/><rect x="3.3" y="8" width="10.5" height="4.5" fill="#f6d0d4" stroke="#d8b0b4" stroke-width="0.9"/><path d="M13.5 10.2h4.5" stroke="#a0a0a0" stroke-width="1"/><path d="M19 10.2 L17 8.7 V11.7Z" fill="#a0a0a0"/></svg>
<div style="position:absolute;left:194px;top:471px;width:1px;height:16px;background:#8f8a8a"></div><div style="position:absolute;left:195px;top:471px;width:1px;height:16px;background:#fff"></div>
<svg style="position:absolute;left:198px;top:468px;" width="20" height="20" viewBox="0 0 20 20"><rect x="3.3" y="2.5" width="4.3" height="5" fill="#d0e0f6" stroke="#b4c2d8" stroke-width="0.9"/><rect x="8.5" y="12.3" width="4.5" height="5.3" fill="#f2f5fa" stroke="#cdd1d8" stroke-width="0.9"/><rect x="13" y="12.3" width="4.5" height="5.3" fill="#f2f5fa" stroke="#cdd1d8" stroke-width="0.9"/><path d="M5.5 7.5v3.5" stroke="#a0a0a0" stroke-width="1"/><path d="M5.5 11.5 L4 9.5 H7Z" fill="#a0a0a0"/></svg>
<svg style="position:absolute;left:221px;top:468px;" width="20" height="20" viewBox="0 0 20 20"><rect x="13.3" y="2.5" width="4.3" height="5" fill="#d0e0f6" stroke="#b4c2d8" stroke-width="0.9"/><rect x="3.5" y="12.3" width="4.5" height="5.3" fill="#f2f5fa" stroke="#cdd1d8" stroke-width="0.9"/><rect x="8" y="12.3" width="4.5" height="5.3" fill="#f2f5fa" stroke="#cdd1d8" stroke-width="0.9"/><path d="M15.5 7.5v3.5" stroke="#a0a0a0" stroke-width="1"/><path d="M15.5 11.5 L14 9.5 H17Z" fill="#a0a0a0"/></svg>
<svg style="position:absolute;left:244px;top:468px;" width="20" height="20" viewBox="0 0 20 20"><path d="M4.5 3.5v4h3.5M16.5 3.5v4h-3.5" fill="none" stroke="#cdd1d8" stroke-width="0.9"/><rect x="8.3" y="3.5" width="4.2" height="9.5" fill="#f6d0d4" stroke="#d8b0b4" stroke-width="0.9"/><path d="M10.4 13v3.5" stroke="#a0a0a0" stroke-width="1"/><path d="M10.4 17.8 L8.9 15.8 H11.9Z" fill="#a0a0a0"/></svg>
<div style="position:absolute;left:271px;top:471px;width:1px;height:16px;background:#8f8a8a"></div><div style="position:absolute;left:272px;top:471px;width:1px;height:16px;background:#fff"></div>
<svg style="position:absolute;left:275px;top:468px;" width="20" height="20" viewBox="0 0 20 20"><rect x="3.5" y="4" width="15.5" height="12.5" fill="#f2f2f2" stroke="#c8ccd4" stroke-width="0.9"/><rect x="4" y="4.5" width="14.5" height="2" fill="#dde4ee"/><path d="M4 9.2h14.5M4 12h14.5M4 14.5h14.5M7.5 6.5v10M11 6.5v10M14.5 6.5v10" stroke="#c8d0dc" stroke-width="0.8"/><rect x="7.5" y="9.2" width="7" height="5.3" fill="#dde6f2" opacity="0.7"/></svg>
<svg style="position:absolute;left:298px;top:468px;" width="20" height="20" viewBox="0 0 20 20"><rect x="3.5" y="4" width="15.5" height="12.5" fill="#f2f2f2" stroke="#c8ccd4" stroke-width="0.9"/><rect x="4" y="4.5" width="14.5" height="2" fill="#dde4ee"/><rect x="8" y="7.5" width="10.5" height="8.5" fill="#d8e2f2"/><path d="M4 9.8h4M4 12.8h4M8 6.5v10" stroke="#c8d0dc" stroke-width="0.8"/></svg>
<div style="position:absolute;left:325px;top:471px;width:1px;height:16px;background:#8f8a8a"></div><div style="position:absolute;left:326px;top:471px;width:1px;height:16px;background:#fff"></div>
<svg style="position:absolute;left:329px;top:468px;" width="20" height="20" viewBox="0 0 20 20"><rect x="2.8" y="9.4" width="16.6" height="1.4" fill="#000"/></svg>
<svg style="position:absolute;left:352px;top:468px;" width="20" height="20" viewBox="0 0 20 20"><path d="M4.5 12.5 L11 5.5 Q12.5 4 14 5.5 L16.8 8 Q18 9.3 16.8 10.6 L12 15.5 H7.5 L4.8 13.5Z" fill="#fff" stroke="#3a4a5a" stroke-width="1"/><path d="M4.5 12.8 L8.5 8.5 L12.5 12.5 L9.6 15.5 H7.5Z" fill="#c4ccd8"/><rect x="9.5" y="15.4" width="9" height="1.3" fill="#000"/></svg>
<svg style="position:absolute;left:375px;top:468px;" width="20" height="20" viewBox="0 0 20 20"><rect x="3.5" y="4.5" width="15.5" height="11.8" fill="#fff" stroke="#1a3a7a" stroke-width="1"/><rect x="4" y="5" width="14.5" height="2" fill="#4a7ad0"/><path d="M4 9.8h14.5M4 12.8h14.5M7.6 7v9M11.3 7v9M15 7v9" stroke="#5a8ad8" stroke-width="0.9" stroke-dasharray="1.2 0.6"/></svg>
<div style="position:absolute;left:402px;top:471px;width:1px;height:16px;background:#8f8a8a"></div><div style="position:absolute;left:403px;top:471px;width:1px;height:16px;background:#fff"></div>
<svg style="position:absolute;left:406px;top:468px;" width="20" height="20" viewBox="0 0 20 20"><path d="M5.5 7.5 L12 14.8 M12 7.5 L5.5 14.8" stroke="#000" stroke-width="2.3"/><text x="13.2" y="16.2" font-family="Liberation Sans" font-weight="bold" font-size="6.5" fill="#2a4aa0">2</text></svg>
<svg style="position:absolute;left:429px;top:468px;" width="20" height="20" viewBox="0 0 20 20"><path d="M7.3 8.5 L13.8 15.8 M13.8 8.5 L7.3 15.8" stroke="#000" stroke-width="2.3"/><text x="15" y="10" font-family="Liberation Sans" font-weight="bold" font-size="6.5" fill="#2a4aa0">2</text></svg>
<div style="position:absolute;left:456px;top:471px;width:1px;height:16px;background:#8f8a8a"></div><div style="position:absolute;left:457px;top:471px;width:1px;height:16px;background:#fff"></div>
<svg style="position:absolute;left:460px;top:468px;" width="20" height="20" viewBox="0 0 20 20"><text x="10" y="16" text-anchor="middle" font-family="Liberation Sans" font-weight="bold" font-size="16" fill="#2a4d9c">&#937;</text></svg>
<svg style="position:absolute;left:483px;top:468px;" width="20" height="20" viewBox="0 0 20 20"><rect x="5" y="3" width="12" height="14.6" fill="#3a3a38"/><rect x="7.8" y="4" width="6.4" height="6" fill="#50c060"/><rect x="7.8" y="4" width="6.4" height="3" fill="#70b8e8"/><rect x="7.8" y="10.8" width="6.4" height="6" fill="#50c060"/><rect x="7.8" y="10.8" width="6.4" height="3" fill="#70b8e8"/><path d="M6.4 3.8v1.2M6.4 6.3v1.2M6.4 8.8v1.2M6.4 11.3v1.2M6.4 13.8v1.2M6.4 16.1v1M15.6 3.8v1.2M15.6 6.3v1.2M15.6 8.8v1.2M15.6 11.3v1.2M15.6 13.8v1.2M15.6 16.1v1" stroke="#d8dcc0" stroke-width="1.2"/></svg>
<svg style="position:absolute;left:506px;top:468px;" width="20" height="20" viewBox="0 0 20 20"><rect x="2.5" y="8" width="15" height="4.5" fill="#4a7ad0" stroke="#2a4a8a" stroke-width="0.8"/><rect x="3" y="8.5" width="14" height="1.3" fill="#90b4ec"/></svg>
<div style="position:absolute;left:533px;top:471px;width:1px;height:16px;background:#8f8a8a"></div><div style="position:absolute;left:534px;top:471px;width:1px;height:16px;background:#fff"></div>
<svg style="position:absolute;left:537px;top:468px;" width="20" height="20" viewBox="0 0 20 20"><path d="M4.5 6 L8.3 10 L4.5 14Z" fill="#4a82d8"/><text x="8.3" y="15" font-family="Liberation Sans" font-weight="bold" font-size="11" fill="#000">&#182;</text></svg>
<svg style="position:absolute;left:560px;top:468px;" width="20" height="20" viewBox="0 0 20 20"><text x="4.5" y="15" font-family="Liberation Sans" font-weight="bold" font-size="11" fill="#000">&#182;</text><path d="M16.5 6 L12.7 10 L16.5 14Z" fill="#4a82d8"/></svg>
<div style="position:absolute;left:587px;top:471px;width:1px;height:16px;background:#8f8a8a"></div><div style="position:absolute;left:588px;top:471px;width:1px;height:16px;background:#fff"></div>
<svg style="position:absolute;left:591px;top:468px;" width="20" height="20" viewBox="0 0 20 20"><defs><linearGradient id="lg1" x1="0" y1="0" x2="1" y2="1"><stop offset="0" stop-color="#fff"/><stop offset="1" stop-color="#b8cced"/></linearGradient></defs><rect x="4" y="4.5" width="14.5" height="11.5" fill="url(#lg1)" stroke="#1a2a5a" stroke-width="0.8" stroke-dasharray="1.2 1"/><g fill="#1a2a5a"><rect x="3" y="3.5" width="2" height="2"/><rect x="17.5" y="3.5" width="2" height="2"/><rect x="3" y="15" width="2" height="2"/><rect x="17.5" y="15" width="2" height="2"/><rect x="10.2" y="3.5" width="2" height="2"/><rect x="10.2" y="15" width="2" height="2"/><rect x="3" y="9.2" width="2" height="2"/><rect x="17.5" y="9.2" width="2" height="2"/></g></svg>
<svg style="position:absolute;left:614px;top:468px;" width="20" height="20" viewBox="0 0 20 20"><rect x="7.5" y="7.5" width="10" height="10" fill="#e8e8e8" stroke="#c8c8c8"/><rect x="3" y="3" width="10" height="10" fill="#f4e8c0" stroke="#e0d4a8"/></svg>
<div style="position:absolute;left:290px;top:415px;width:76px;height:22px;box-sizing:border-box;border:1px solid #cccccc;border-right:none;background:#fff;font:11px 'Liberation Sans', sans-serif;color:#000;padding-left:4px;line-height:19px">Paragraph</div><div style="position:absolute;left:365px;top:415px;width:11px;height:22px;box-sizing:border-box;border:1px solid #cccccc;background:#e8e8e8"></div><svg style="position:absolute;left:367px;top:424px;" width="7" height="4" viewBox="0 0 7 4"><path d="M0 0 H7 L3.5 4Z" fill="#000"/></svg>
<div style="position:absolute;left:378px;top:415px;width:76px;height:22px;box-sizing:border-box;border:1px solid #cccccc;border-right:none;background:#fff;font:11px 'Liberation Sans', sans-serif;color:#000;padding-left:4px;line-height:19px">Font Family</div><div style="position:absolute;left:453px;top:415px;width:11px;height:22px;box-sizing:border-box;border:1px solid #cccccc;background:#e8e8e8"></div><svg style="position:absolute;left:455px;top:424px;" width="7" height="4" viewBox="0 0 7 4"><path d="M0 0 H7 L3.5 4Z" fill="#000"/></svg>
<div style="position:absolute;left:466px;top:415px;width:76px;height:22px;box-sizing:border-box;border:1px solid #cccccc;border-right:none;background:#fff;font:11px 'Liberation Sans', sans-serif;color:#000;padding-left:4px;line-height:19px">Font Size</div><div style="position:absolute;left:541px;top:415px;width:11px;height:22px;box-sizing:border-box;border:1px solid #cccccc;background:#e8e8e8"></div><svg style="position:absolute;left:543px;top:424px;" width="7" height="4" viewBox="0 0 7 4"><path d="M0 0 H7 L3.5 4Z" fill="#000"/></svg>
<svg style="position:absolute;left:563px;top:416px;" width="20" height="20" viewBox="0 0 20 20"><text x="10" y="14.3" text-anchor="middle" font-family="Liberation Serif" font-weight="bold" font-size="16" fill="#2b4f9c">A</text><rect x="1.5" y="16" width="16.5" height="3.5" fill="#808080"/></svg>
<svg style="position:absolute;left:585px;top:425px;" width="7" height="4" viewBox="0 0 7 4"><path d="M0 0 H6 L3 3.5Z" fill="#000"/></svg>
<svg style="position:absolute;left:595px;top:416px;" width="20" height="20" viewBox="0 0 20 20"><rect x="1.9" y="3.3" width="9" height="8.4" fill="#f4f040"/><text x="1.8" y="10.6" font-family="Liberation Sans" font-size="9.5" fill="#000" letter-spacing="-0.3">ab</text><path d="M8 13 L15 5 L17.5 7 L10.5 14.5Z" fill="#d8e4f4" stroke="#4a6ea8" stroke-width="0.8"/><path d="M8 13 L7 15.5 L10 14.5Z" fill="#e8c070"/><rect x="1.5" y="16" width="16.5" height="3.5" fill="#808080"/></svg>
<svg style="position:absolute;left:617px;top:425px;" width="7" height="4" viewBox="0 0 7 4"><path d="M0 0 H6 L3 3.5Z" fill="#000"/></svg>
</div>
<div style="position:absolute;left:636px;top:59px;width:15px;height:494px;background:#dcdbd9"></div>
<div style="position:absolute;left:636px;top:59px;width:1px;height:494px;background:#a8a8a6"></div>
<div style="position:absolute;left:636px;top:59px;width:15px;height:15px;box-sizing:border-box;border:1px solid #a9a9a7;border-radius:3px 3px 0 0;background:#fbfbfa"></div>
<svg style="position:absolute;left:640px;top:65px;" width="7" height="5" viewBox="0 0 7 5"><path d="M0 4 L3.5 0 L7 4Z" fill="#9a9a9a"/></svg>
<div style="position:absolute;left:636px;top:74px;width:15px;height:394px;box-sizing:border-box;border:1px solid #a9a9a7;border-top:none;background:linear-gradient(90deg,#f6f5f3 50%,#ebeae8 50%)"></div>
<div style="position:absolute;left:641px;top:268px;width:5px;height:1px;background:#9b9b9b"></div>
<div style="position:absolute;left:641px;top:271px;width:5px;height:1px;background:#9b9b9b"></div>
<div style="position:absolute;left:641px;top:274px;width:5px;height:1px;background:#9b9b9b"></div>
<div style="position:absolute;left:636px;top:538px;width:15px;height:15px;box-sizing:border-box;border:1px solid #a9a9a7;border-radius:0 0 3px 3px;background:#fbfbfa"></div>
<svg style="position:absolute;left:640px;top:544px;" width="8" height="5" viewBox="0 0 8 5"><path d="M0 0 H8 L4 4.5Z" fill="#111"/></svg>
<div style="position:absolute;left:9px;top:553px;width:627px;height:15px;background:#dcdbd9"></div>
<div style="position:absolute;left:9px;top:553px;width:627px;height:1px;background:#a8a8a6"></div>
<div style="position:absolute;left:9px;top:553px;width:15px;height:15px;box-sizing:border-box;border:1px solid #a9a9a7;border-radius:3px 0 0 3px;background:#fbfbfa"></div>
<svg style="position:absolute;left:14px;top:557px;" width="5" height="7" viewBox="0 0 5 7"><path d="M4 0 V7 L0 3.5Z" fill="#9a9a9a"/></svg>
<div style="position:absolute;left:23px;top:553px;width:508px;height:15px;box-sizing:border-box;border:1px solid #a9a9a7;border-left:none;background:linear-gradient(#f6f5f3 50%,#ebeae8 50%)"></div>
<div style="position:absolute;left:274px;top:558px;width:1px;height:5px;background:#9b9b9b"></div>
<div style="position:absolute;left:277px;top:558px;width:1px;height:5px;background:#9b9b9b"></div>
<div style="position:absolute;left:280px;top:558px;width:1px;height:5px;background:#9b9b9b"></div>
<div style="position:absolute;left:621px;top:553px;width:15px;height:15px;box-sizing:border-box;border:1px solid #a9a9a7;border-radius:0 3px 3px 0;background:#fbfbfa"></div>
<svg style="position:absolute;left:626.5px;top:557px;" width="5" height="8" viewBox="0 0 5 8"><path d="M0 0 V8 L4.5 4Z" fill="#111"/></svg>
<div style="position:absolute;left:636px;top:553px;width:15px;height:15px;background:#fff"></div>
</body></html>
